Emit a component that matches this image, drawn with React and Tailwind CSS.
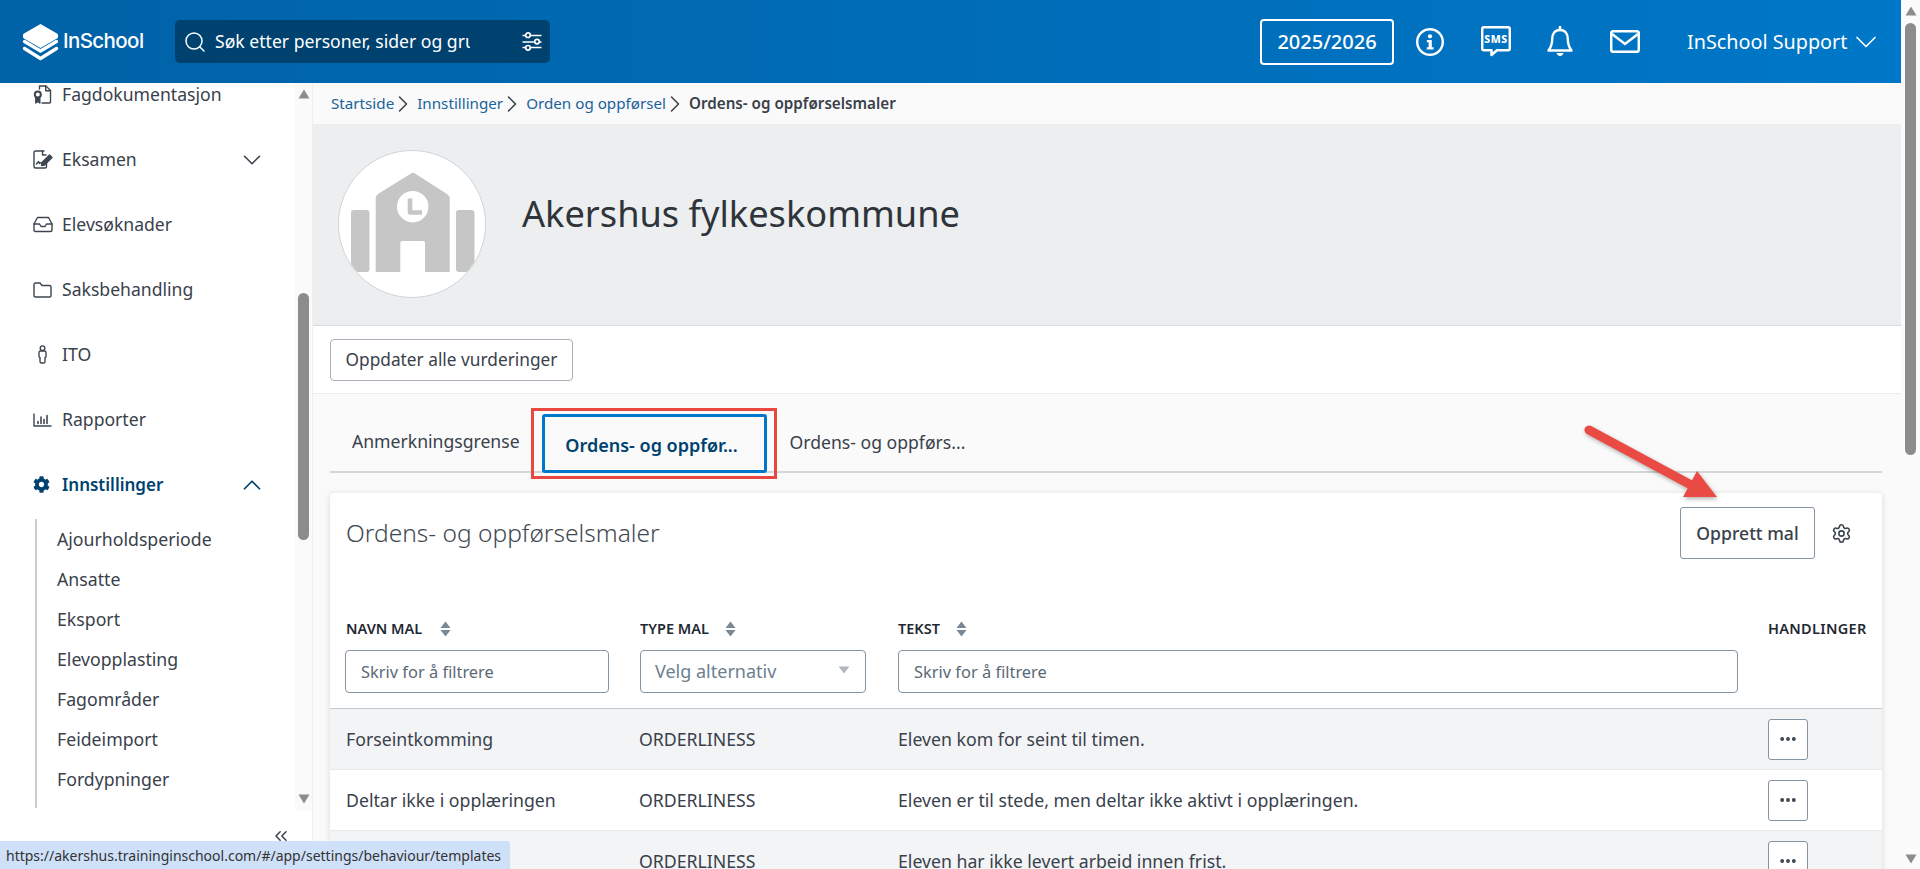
import React from 'react'
import { ChevronDown, ChevronUp, ChevronRight, ChevronsLeft, Search, Settings, MoreHorizontal } from 'lucide-react'
import { FaCog } from 'react-icons/fa'

const font = { fontFamily: '"Noto Sans", sans-serif' }

function Logo() {
  return (
    <div className="flex w-[121px] shrink-0 items-center">
      <svg width="37" height="38" viewBox="0 0 37 38" className="shrink-0">
        <path d="M18.5 1 L35 10.5 Q36 11 36 12 V14 Q36 15 35 15.5 L18.5 25 L2 15.5 Q1 15 1 14 V12 Q1 11 2 10.5 Z" fill="#fff" />
        <path d="M2.5 18.5 L18.5 28 L34.5 18.5" fill="none" stroke="#fff" strokeWidth="3.4" strokeLinejoin="round" strokeLinecap="round" />
        <path d="M2.5 25.5 L18.5 35.5 L34.5 25.5" fill="none" stroke="#fff" strokeWidth="3.4" strokeLinejoin="round" strokeLinecap="round" />
      </svg>
      <span className="ml-[4px] text-[20.5px] font-medium tracking-[-0.6px] text-white" style={{ fontFamily: '"Inter", sans-serif' }}>InSchool</span>
    </div>
  )
}

function FilterIcon() {
  return (
    <svg width="20" height="19" viewBox="0 0 20 19" fill="none" className="ml-auto shrink-0">
      <path d="M0.5 3.5 H19.5 M0.5 10 H19.5 M0.5 15.5 H19.5" stroke="#fff" strokeWidth="1.7" />
      <circle cx="6" cy="3.2" r="2.3" fill="#00426f" stroke="#fff" strokeWidth="1.7" />
      <circle cx="15" cy="9.6" r="2.3" fill="#00426f" stroke="#fff" strokeWidth="1.7" />
      <circle cx="6" cy="15.8" r="2.3" fill="#00426f" stroke="#fff" strokeWidth="1.7" />
    </svg>
  )
}

function InfoIcon() {
  return (
    <svg width="28" height="28" viewBox="0 0 28 28" fill="none">
      <circle cx="14" cy="14" r="12.8" stroke="#fff" strokeWidth="2.4" />
      <circle cx="14" cy="8.3" r="2.1" fill="#fff" />
      <path d="M10.8 12 H15.8 V19.2 H17.6 V21.6 H10.8 V19.2 H12.6 V14.3 H10.8 Z" fill="#fff" />
    </svg>
  )
}

function SmsIcon() {
  return (
    <svg width="30" height="31" viewBox="0 0 30 31" fill="none">
      <path d="M3 1.2 H27 Q28.8 1.2 28.8 3 V22.5 Q28.8 24.2 27 24.2 H16 L10.5 29 V24.2 H3 Q1.2 24.2 1.2 22.5 V3 Q1.2 1.2 3 1.2 Z" stroke="#fff" strokeWidth="2.5" strokeLinejoin="round" />
      <text x="15" y="17" textAnchor="middle" fontSize="10.5" fontWeight="800" letterSpacing="0.5" fill="#fff" fontFamily="Noto Sans, sans-serif">SMS</text>
    </svg>
  )
}

function BellIcon() {
  return (
    <svg width="26" height="31" viewBox="0 0 26 31" fill="none">
      <path d="M13 4 C7.5 4 5.2 8.5 5.2 13 C5.2 19 3.8 21.5 1.5 24.5 H24.5 C22.2 21.5 20.8 19 20.8 13 C20.8 8.5 18.5 4 13 4 Z" stroke="#fff" strokeWidth="2.4" strokeLinejoin="round" />
      <path d="M13 1 V4" stroke="#fff" strokeWidth="2.6" strokeLinecap="round" />
      <path d="M9.5 27 H16.5 Q15.5 30 13 30 Q10.5 30 9.5 27 Z" fill="#fff" />
    </svg>
  )
}

function MailIcon() {
  return (
    <svg width="30" height="23" viewBox="0 0 30 23" fill="none">
      <rect x="1.2" y="1.2" width="27.6" height="20.6" rx="2" stroke="#fff" strokeWidth="2.5" />
      <path d="M2 4 L15 14 L28 4" stroke="#fff" strokeWidth="2.5" />
    </svg>
  )
}

function Header() {
  return (
    <header className="flex h-[83px] shrink-0 items-center bg-gradient-to-r from-[#0062a7] to-[#0077c8] pl-[22px] pr-[25px]">
      <Logo />
      <div className="ml-[32px] flex h-[43px] w-[375px] items-center rounded-[5px] bg-[#00426f] pl-[8px] pr-[8px] text-white">
        <Search size={24} strokeWidth={1.5} className="shrink-0" />
        <div className="ml-[8px] w-[255px] overflow-hidden whitespace-nowrap text-[17.6px]">Søk etter personer, sider og gru</div>
        <FilterIcon />
      </div>
      <div className="ml-auto flex items-center">
        <div className="flex h-[46px] w-[134px] items-center justify-center rounded-[4px] border-2 border-white text-[20px] font-medium text-white">2025/2026</div>
        <div className="ml-[22px]"><InfoIcon /></div>
        <div className="ml-[37px]"><SmsIcon /></div>
        <div className="ml-[36px]"><BellIcon /></div>
        <div className="ml-[37px]"><MailIcon /></div>
        <span className="ml-[47px] w-[161px] whitespace-nowrap text-[19.8px] text-white">InSchool Support</span>
        <ChevronDown size={36} strokeWidth={1.1} className="-mr-[8px] text-white" />
      </div>
    </header>
  )
}

const stroke = { fill: 'none', stroke: '#3d4650', strokeWidth: 1.4, strokeLinejoin: 'round', strokeLinecap: 'round' }

function DocIcon() {
  return (
    <svg width="19" height="19" viewBox="0 0 19 19" {...stroke}>
      <path d="M6.5 4 V1 H13 L17.5 5.5 V17 Q17.5 18 16.5 18 H9" />
      <path d="M12.7 1 V5.8 H17.5" />
      <circle cx="4.8" cy="9.5" r="3" strokeWidth="2" />
      <path d="M2.8 12.5 V18 L4.8 16.5 L6.8 18 V12.5" fill="#3d4650" />
    </svg>
  )
}

function ExamIcon() {
  return (
    <svg width="20" height="19" viewBox="0 0 20 19" {...stroke}>
      <path d="M11 1 H2.5 Q1 1 1 2.5 V16.5 Q1 18 2.5 18 H12 Q13.5 18 13.5 16.5 V12" />
      <path d="M9.5 1 V5 H13" />
      <path d="M3.5 14 L5.5 11.5 L6.5 13.5 L8 12.5" />
      <path d="M9 12.5 L16.5 5 L19 7.5 L11.5 15 L8.5 15.5 Z" fill="#3d4650" />
    </svg>
  )
}

function InboxIcon() {
  return (
    <svg width="20" height="17" viewBox="0 0 20 17" {...stroke}>
      <path d="M4.5 1.5 H15.5 L19 8 V14 Q19 15.5 17.5 15.5 H2.5 Q1 15.5 1 14 V8 Z" />
      <path d="M1 8 H6.5 L8 10.5 H12 L13.5 8 H19" />
    </svg>
  )
}

function FolderIcon() {
  return (
    <svg width="19" height="16" viewBox="0 0 19 16" {...stroke}>
      <path d="M1 2.5 Q1 1 2.5 1 H7 L9 3.5 H16.5 Q18 3.5 18 5 V13.5 Q18 15 16.5 15 H2.5 Q1 15 1 13.5 Z" />
    </svg>
  )
}

function PersonIcon() {
  return (
    <svg width="19" height="19" viewBox="0 0 19 19" {...stroke}>
      <circle cx="9.5" cy="3.2" r="2.3" />
      <path d="M6 7.5 Q6 6 7.5 6 H11.5 Q13 6 13 7.5 V11.5 Q13 12.5 12 12.5 V16.5 Q12 18 10.5 18 H8.5 Q7 18 7 16.5 V12.5 Q6 12.5 6 11.5 Z" />
    </svg>
  )
}

function ChartIcon() {
  return (
    <svg width="19" height="14" viewBox="0 0 19 14" {...stroke}>
      <path d="M1 1 V13 H18" />
      <path d="M5 10.5 V8.5 M8 10.5 V4 M11 10.5 V6.5 M14 10.5 V2.5" strokeWidth="1.6" />
    </svg>
  )
}

const navItems = [
  { label: 'Fagdokumentasjon', icon: <DocIcon /> },
  { label: 'Eksamen', icon: <ExamIcon />, chevron: true },
  { label: 'Elevsøknader', icon: <InboxIcon /> },
  { label: 'Saksbehandling', icon: <FolderIcon /> },
  { label: 'ITO', icon: <PersonIcon /> },
  { label: 'Rapporter', icon: <ChartIcon /> },
]

const subItems = ['Ajourholdsperiode', 'Ansatte', 'Eksport', 'Elevopplasting', 'Fagområder', 'Feideimport', 'Fordypninger']

function Arrow({ down, className }) {
  return (
    <svg width="12" height="10" viewBox="0 0 12 10" className={className}>
      <path d={down ? 'M0.5 0.5 H11.5 L6 9.5 Z' : 'M6 0.5 L11.5 9.5 H0.5 Z'} fill="#8c8c8c" />
    </svg>
  )
}

function Sidebar() {
  return (
    <aside className="flex w-[313px] shrink-0 flex-col overflow-hidden border-r border-[#eeeeee] bg-white">
      <div className="flex h-[727px] shrink-0">
        <nav className="w-[295px] overflow-hidden">
          <ul className="-mt-[21px]">
            {navItems.map(item => (
              <li key={item.label} className="flex h-[65px] items-center pl-[33px] pr-[35px] text-[#39414b]">
                <span className="flex w-[29px] shrink-0 items-center">{item.icon}</span>
                <span className="text-[17.6px]">{item.label}</span>
                {item.chevron && <ChevronDown size={30} strokeWidth={1.25} className="-mr-[7px] ml-auto" />}
              </li>
            ))}
            <li className="flex h-[65px] items-center pl-[33px] pr-[35px] text-[#00426f]">
              <span className="flex w-[29px] shrink-0 items-center"><FaCog size={17} /></span>
              <span className="text-[17px] font-semibold">Innstillinger</span>
              <ChevronUp size={30} strokeWidth={1.4} className="-mr-[7px] ml-auto" />
            </li>
          </ul>
          <ul className="ml-[35px] mt-[2px] border-l-2 border-[#c9ced3] pb-[9px] pl-[20px]">
            {subItems.map(item => (
              <li key={item} className="flex h-[40px] items-center text-[17.7px] text-[#39414b]">{item}</li>
            ))}
          </ul>
        </nav>
        <div className="flex w-[17px] flex-col items-center bg-[#fafafa]">
          <Arrow className="mt-[6px] shrink-0" />
          <div className="mt-[194px] h-[247px] w-[11px] shrink-0 rounded-full bg-[#8c8c8c]" />
          <Arrow down className="mt-[254px] shrink-0" />
        </div>
      </div>
      <div className="flex flex-1 justify-end pr-[21px] pt-[16px]">
        <ChevronsLeft size={20} strokeWidth={1.8} className="text-[#39414b]" />
      </div>
    </aside>
  )
}

function Crumb({ children }) {
  return (
    <>
      <span className="text-[#1b639b]">{children}</span>
      <ChevronRight size={28} strokeWidth={1.3} className="-ml-[5px] text-[#39414b]" />
    </>
  )
}

function Building() {
  return (
    <svg width="148" height="148" viewBox="0 0 148 148">
      <rect x="12" y="59" width="18.5" height="62" rx="3" fill="#c6c6c6" />
      <rect x="117" y="59" width="18.5" height="62" rx="3" fill="#c6c6c6" />
      <path d="M72 22.5 Q74 21 76 22.5 L108 43 Q110.7 45 110.7 47 V121 H86 V92 Q86 90 84 90 H63.3 Q61.3 90 61.3 92 V121 H36.7 V47 Q36.7 45 39 43 Z" fill="#c6c6c6" />
      <circle cx="73.7" cy="55.7" r="15.7" fill="#fff" />
      <path d="M71 47.5 V61.5 H83" fill="none" stroke="#c6c6c6" strokeWidth="4.6" strokeLinejoin="round" />
    </svg>
  )
}

function SortIcon() {
  return (
    <svg width="11" height="16" viewBox="0 0 11 16" className="shrink-0">
      <path d="M5.5 0.5 L10.5 7 H0.5 Z M5.5 15.5 L0.5 9 H10.5 Z" fill="#7a8794" />
    </svg>
  )
}

function ColumnHead({ label, gap }) {
  return (
    <div className="flex h-[20px] items-center text-[14.5px] font-semibold uppercase text-[#1f2933]">
      <span>{label}</span>
      <span className={gap}><SortIcon /></span>
    </div>
  )
}

const rows = [
  ['Forseintkomming', 'Eleven kom for seint til timen.'],
  ['Deltar ikke i opplæringen', 'Eleven er til stede, men deltar ikke aktivt i opplæringen.'],
  ['', 'Eleven har ikke levert arbeid innen frist.'],
]

function Table() {
  return (
    <div>
      <div className="grid grid-cols-[295px_258px_870px_1fr] border-b border-[#c3cad1] pb-[15px] pl-[15px] pt-[60px]">
        <div>
          <div className="pl-[1px]"><ColumnHead label="Navn mal" gap="ml-[18px]" /></div>
          <input placeholder="Skriv for å filtrere" className="mt-[11px] h-[43px] w-[264px] rounded-[4px] border border-[#8594a3] px-[15px] text-[16.4px] placeholder:text-[#5b6976]" />
        </div>
        <div>
          <ColumnHead label="Type mal" gap="ml-[16px]" />
          <div className="mt-[11px] flex h-[43px] w-[226px] items-center justify-between rounded-[4px] border border-[#8594a3] pl-[14px] pr-[15px] text-[18px] text-[#6d7e8e]">
            <span>Velg alternativ</span>
            <svg width="12" height="8" viewBox="0 0 12 8" className="-mt-[4px]"><path d="M0.5 0.5 H11.5 L6 7.5 Z" fill="#b2b8be" /></svg>
          </div>
        </div>
        <div>
          <ColumnHead label="Tekst" gap="ml-[16px]" />
          <input placeholder="Skriv for å filtrere" className="mt-[11px] h-[43px] w-[840px] rounded-[4px] border border-[#8594a3] px-[15px] text-[16.4px] placeholder:text-[#5b6976]" />
        </div>
        <div className="flex h-[20px] items-center whitespace-nowrap text-[14.5px] font-semibold uppercase tracking-[0.3px] text-[#1f2933]">Handlinger</div>
      </div>
      {rows.map((row, i) => (
        <div key={row[1]} className={`grid h-[61px] grid-cols-[293px_259px_870px_1fr] items-center border-b border-[#e8eaec] pl-[16px] text-[17.7px] text-[#39414b] ${i % 2 === 0 ? 'bg-[#f3f4f6]' : 'bg-white'}`}>
          <span>{row[0]}</span>
          <span>ORDERLINESS</span>
          <span>{row[1]}</span>
          <button className="flex h-[41px] w-[40px] items-center justify-center rounded-[3px] border border-[#8594a3] bg-white text-[#39414b]">
            <MoreHorizontal size={20} strokeWidth={2.6} />
          </button>
        </div>
      ))}
    </div>
  )
}

function Main() {
  return (
    <main className="flex min-w-0 flex-1 flex-col overflow-hidden bg-[#fafafa]">
      <div className="flex h-[41px] shrink-0 items-center pl-[18px] text-[15.2px]">
        <Crumb>Startside</Crumb>
        <Crumb>Innstillinger</Crumb>
        <Crumb>Orden og oppførsel</Crumb>
        <span className="font-semibold text-[#39414b]">Ordens- og oppførselsmaler</span>
      </div>
      <section className="flex h-[202px] shrink-0 items-center border-b border-[#d8dce0] bg-[#eceef0] pl-[25px]">
        <div className="mb-[1px] h-[148px] w-[148px] shrink-0 overflow-hidden rounded-full border border-[#cfd5da] bg-white"><Building /></div>
        <h1 className="mb-[22px] ml-[36px] text-[36.2px] text-[#2e343a]">Akershus fylkeskommune</h1>
      </section>
      <div className="flex h-[68px] shrink-0 items-center border-b border-[#ececec] bg-white pl-[17px]">
        <button className="h-[42px] w-[243px] rounded-[4px] border border-[#a8b1ba] text-[17.3px] text-[#39414b]">Oppdater alle vurderinger</button>
      </div>
      <div className="pl-[17px] pr-[19px]">
        <div className="flex h-[79px] items-end border-b-2 border-[#d2d7db] text-[17.6px] text-[#39414b]">
          <div className="flex h-[59px] items-center whitespace-nowrap px-[22px]">Anmerkningsgrense</div>
          <div className="relative -mb-[2px] flex h-[59px] w-[225px] items-center justify-center whitespace-nowrap rounded-[3px] border-[3px] border-[#0077c8] pr-[5px] pt-[3px] text-[18px] font-semibold text-[#00426f]">
            Ordens- og oppfør...
            <span className="absolute -bottom-[9px] -left-[14px] -right-[13px] -top-[9px] border-[3px] border-[#e8483f]" />
          </div>
          <div className="flex h-[59px] items-center whitespace-nowrap px-[23px] pt-[1px]">Ordens- og oppførs...</div>
        </div>
        <div className="mt-[20px] rounded-[4px] bg-white shadow-[0_1px_6px_rgba(0,0,0,0.14)]">
          <div className="flex items-start pr-[30px] pt-[14px]">
            <h2 className="ml-[16px] mt-[8px] text-[24.5px] font-light text-[#414950]">Ordens- og oppførselsmaler</h2>
            <button className="ml-auto h-[52px] w-[135px] rounded-[3px] border border-[#8594a3] text-[17.6px] font-medium text-[#39414b]">Opprett mal</button>
            <Settings size={21} strokeWidth={1.8} className="ml-[16px] mt-[16px] text-[#39414b]" />
          </div>
          <Table />
        </div>
      </div>
    </main>
  )
}

export default function App() {
  return (
    <div className="relative flex h-[869px] w-full overflow-hidden bg-[#fafafa]" style={font}>
      <div className="flex min-w-0 flex-1 flex-col">
        <Header />
        <div className="flex min-h-0 flex-1">
          <Sidebar />
          <Main />
        </div>
      </div>
      <div className="flex w-[19px] shrink-0 flex-col items-center bg-[#fbfbfb]">
        <Arrow className="mt-[6px] shrink-0" />
        <div className="mt-[7px] h-[432px] w-[11px] shrink-0 rounded-full bg-[#8c8c8c]" />
        <Arrow down className="mt-[399px] shrink-0" />
      </div>
      <svg width="150" height="90" viewBox="0 0 150 90" className="absolute left-[1575px] top-[418px]">
        <g style={{ filter: 'drop-shadow(1px 2px 2px rgba(0,0,0,0.3))' }}>
          <path d="M14 12 L118 68" stroke="#e94b44" strokeWidth="9" strokeLinecap="round" />
          <path d="M122 53 L142 79 L108 79 Z" fill="#e94b44" />
        </g>
      </svg>
      <div className="absolute bottom-0 left-0 flex h-[28px] w-[510px] items-center whitespace-nowrap rounded-tr-[3px] bg-[#cfe0f9] pl-[6px] text-[14px] text-[#333333]">
        https://akershus.traininginschool.com/#/app/settings/behaviour/templates
      </div>
    </div>
  )
}
